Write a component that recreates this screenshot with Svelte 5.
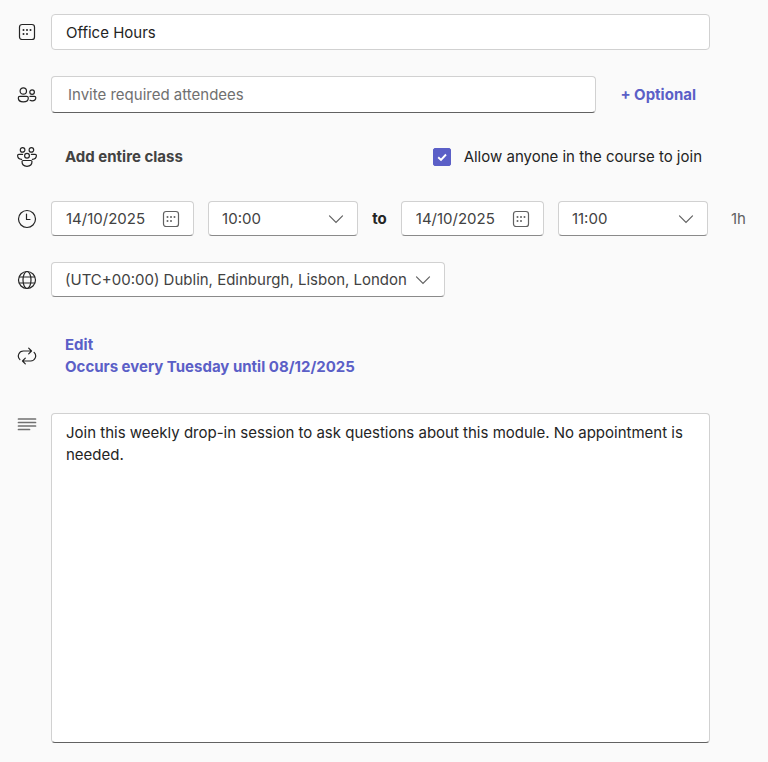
<script>
  let title = $state('Office Hours');
  let attendees = $state('');
  let openToCourse = $state(true);
  let startDate = $state('14/10/2025');
  let endDate = $state('14/10/2025');
  let startTime = $state('10:00');
  let endTime = $state('11:00');
  let zone = $state('(UTC+00:00) Dublin, Edinburgh, Lisbon, London');
  let details = $state(
    'Join this weekly drop-in session to ask questions about this module. No appointment is needed.'
  );
  const times = ['09:00', '10:00', '11:00', '12:00'];
</script>

{#snippet calendar()}
  <svg class="icon" viewBox="0 0 20 20" aria-hidden="true">
    <rect x="2.5" y="2.5" width="15" height="15" rx="2.6" />
    <g class="dots">
      <circle cx="6.5" cy="8" r="1" /><circle cx="10" cy="8" r="1" /><circle cx="13.5" cy="8" r="1" />
      <circle cx="6.5" cy="12" r="1" /><circle cx="10" cy="12" r="1" />
    </g>
  </svg>
{/snippet}

{#snippet chevron()}
  <svg class="chevron" viewBox="0 0 16 16" aria-hidden="true"><path d="M1.5 4.8 8 11.3l6.5-6.5" /></svg>
{/snippet}

<form>
  <div class="row">
    <label class="lead" for="title" aria-label="Title">{@render calendar()}</label>
    <input id="title" class="field wide" type="text" bind:value={title} />
  </div>

  <div class="row">
    <label class="lead" for="attendees" aria-label="Required attendees">
      <svg class="icon" viewBox="0 0 20 20" aria-hidden="true">
        <circle cx="6.3" cy="6" r="3.2" />
        <circle cx="15.1" cy="7.1" r="2.3" />
        <path d="M2.8 11.4h7c.9 0 1.5.6 1.5 1.5 0 2.4-2.1 3.9-5 3.9s-5-1.5-5-3.9c0-.9.6-1.5 1.5-1.5z" />
        <path d="M13 11.4h4.4c.8 0 1.4.6 1.4 1.4 0 1.9-1.6 3-3.7 3-.8 0-1.5-.2-2.1-.5" />
      </svg>
    </label>
    <div class="line invite wide">
      <input id="attendees" class="field lined grow" type="text" placeholder="Invite required attendees" bind:value={attendees} />
      <button type="button" class="action">+ Optional</button>
    </div>
  </div>

  <div class="row class-row">
    <span class="lead">
      <svg class="icon" viewBox="0 0 20 20" aria-hidden="true">
        <circle cx="5.6" cy="2.9" r="2.3" /><circle cx="14.4" cy="2.9" r="2.3" />
        <circle cx="10" cy="8.8" r="2.4" />
        <path d="M5.6 7.4H1.8c-.7 0-1.2.5-1.2 1.1 0 2.2 1.5 3.7 4 3.9" />
        <path d="M14.4 7.4h3.8c.7 0 1.2.5 1.2 1.1 0 2.2-1.5 3.7-4 3.9" />
        <path d="M6.2 13.5h7.6c.7 0 1.2.5 1.2 1.1 0 2.8-2 4.7-5 4.7s-5-1.9-5-4.7c0-.6.5-1.1 1.2-1.1z" />
      </svg>
    </span>
    <div class="line between wide">
      <button type="button" class="add">Add entire class</button>
      <label class="check">
        <input type="checkbox" bind:checked={openToCourse} />
        Allow anyone in the course to join
      </label>
    </div>
  </div>

  <div class="row">
    <span class="lead">
      <svg class="icon" viewBox="0 0 20 20" aria-hidden="true">
        <circle cx="10" cy="10" r="8.5" /><path d="M9.5 5v5.5H13" />
      </svg>
    </span>
    <div class="line when">
      <div class="control date">
        <input class="field lined" type="text" aria-label="Start date" bind:value={startDate} />
        <button type="button" aria-label="Choose start date">{@render calendar()}</button>
      </div>
      <div class="control time">
        <select class="field lined" aria-label="Start time" bind:value={startTime}>
          {#each times as time}<option>{time}</option>{/each}
        </select>
        {@render chevron()}
      </div>
      <span class="to">to</span>
      <div class="control date">
        <input class="field lined" type="text" aria-label="End date" bind:value={endDate} />
        <button type="button" aria-label="Choose end date">{@render calendar()}</button>
      </div>
      <div class="control time">
        <select class="field lined" aria-label="End time" bind:value={endTime}>
          {#each times as time}<option>{time}</option>{/each}
        </select>
        {@render chevron()}
      </div>
      <span class="duration">1h</span>
    </div>
  </div>

  <div class="row">
    <label class="lead" for="zone" aria-label="Time zone">
      <svg class="icon" viewBox="0 0 20 20" aria-hidden="true">
        <circle cx="10" cy="10" r="8.5" /><ellipse cx="10" cy="10" rx="4" ry="8.5" />
        <path d="M2.3 7h15.4M2.3 13h15.4" />
      </svg>
    </label>
    <div class="control zone">
      <select id="zone" class="field lined" bind:value={zone}>
        <option>(UTC+00:00) Dublin, Edinburgh, Lisbon, London</option>
      </select>
      {@render chevron()}
    </div>
  </div>

  <div class="row repeat">
    <span class="lead">
      <svg class="icon" viewBox="0 0 20 20" aria-hidden="true">
        <path d="M2.9 13.6A5 5 0 0 1 6.4 5H14M11.7 2.2 14.5 5l-2.8 2.8" />
        <path d="M17.1 6.4A5 5 0 0 1 13.6 15H6M8.3 12.2 5.5 15l2.8 2.8" />
      </svg>
    </span>
    <div class="links">
      <a href="#edit">Edit</a>
      <a href="#recurrence">Occurs every Tuesday until 08/12/2025</a>
    </div>
  </div>

  <div class="row details">
    <label class="lead" for="details" aria-label="Details">
      <svg class="icon lines" viewBox="0 0 20 20" aria-hidden="true">
        <path d="M1.5 6h17M1.5 9.5h17M1.5 13h17M1.5 16.5h11" />
      </svg>
    </label>
    <textarea id="details" class="field lined wide" rows="14" bind:value={details}></textarea>
  </div>
</form>

<style>
  :global(body) {
    background: #fafafa;
  }
  form {
    display: flex;
    flex-direction: column;
    gap: 26px;
    padding: 14px 22px 19px 17px;
    color: #242424;
    font: 15px/22px Inter, 'Liberation Sans', sans-serif;
  }
  .row {
    display: flex;
    align-items: center;
    gap: 14px;
  }
  .lead {
    display: flex;
    flex: none;
  }
  .icon {
    width: 20px;
    height: 20px;
    fill: none;
    stroke: currentColor;
    stroke-width: 1.2;
    stroke-linecap: round;
    stroke-linejoin: round;
  }
  .dots {
    fill: currentColor;
    stroke: none;
  }
  .lines {
    color: #707070;
    stroke-width: 1.7;
  }
  input,
  select,
  textarea,
  button {
    font: inherit;
    color: inherit;
  }
  button {
    padding: 0;
    border: 0;
    background: none;
    cursor: pointer;
  }
  .field {
    box-sizing: border-box;
    min-width: 0;
    height: 36px;
    padding: 0 14px;
    border: 1px solid #d1d1d1;
    border-radius: 4px;
    background: #fff;
    appearance: none;
  }
  .lined {
    border-bottom-color: #616161;
  }
  .wide {
    flex: 1;
    margin-right: 36px;
  }
  .line {
    display: flex;
    flex: 1;
    align-items: center;
    gap: 14px;
    min-width: 0;
  }
  .grow {
    flex: 1;
    height: 37px;
    padding: 0 16px;
  }
  .grow::placeholder {
    color: #707070;
    opacity: 1;
  }
  .invite {
    gap: 24px;
    padding-right: 14px;
  }
  .action,
  .add,
  .to,
  .links a {
    font-weight: 700;
  }
  .action,
  .links a {
    color: #5b5fc7;
    text-decoration: none;
  }
  .class-row {
    min-height: 36px;
  }
  .between {
    justify-content: space-between;
    padding: 0 8px 0 14px;
  }
  .add {
    color: #424242;
  }
  .check {
    display: flex;
    align-items: center;
    gap: 13px;
  }
  .check input {
    width: 18px;
    height: 18px;
    margin: 0;
    border: 1px solid #616161;
    border-radius: 2px;
    appearance: none;
  }
  .check input:checked {
    border-color: #5b5fc7;
    background: #5b5fc7
      url("data:image/svg+xml,%3Csvg xmlns='http://www.w3.org/2000/svg' viewBox='0 0 16 16'%3E%3Cpath d='M4.2 8.2 7 10.9l5-5.4' fill='none' stroke='white' stroke-width='1.9'/%3E%3C/svg%3E")
      center / 16px no-repeat;
  }
  .control {
    position: relative;
    display: flex;
    align-items: center;
    color: #424242;
  }
  .control .field {
    width: 100%;
    height: 35px;
    border-bottom-color: #8a8a8a;
  }
  .control select {
    padding-left: 13px;
  }
  .date {
    flex: 143 1 0;
  }
  .time {
    flex: 150 1 0;
  }
  .date button {
    position: absolute;
    right: 13px;
    display: flex;
    color: #616161;
  }
  .chevron {
    position: absolute;
    right: 14px;
    width: 16px;
    height: 16px;
    fill: none;
    stroke: #616161;
    stroke-width: 1.2;
    stroke-linecap: round;
    pointer-events: none;
  }
  .zone .field {
    padding-right: 37px;
  }
  .duration {
    margin-left: 9px;
    color: #616161;
  }
  .repeat {
    margin: 11px 0 9px;
  }
  .links {
    display: flex;
    flex-direction: column;
    align-items: flex-start;
    padding-left: 14px;
  }
  .details {
    align-items: flex-start;
  }
  textarea.field {
    height: auto;
    padding: 8px 14px 12px;
    resize: none;
  }
</style>
